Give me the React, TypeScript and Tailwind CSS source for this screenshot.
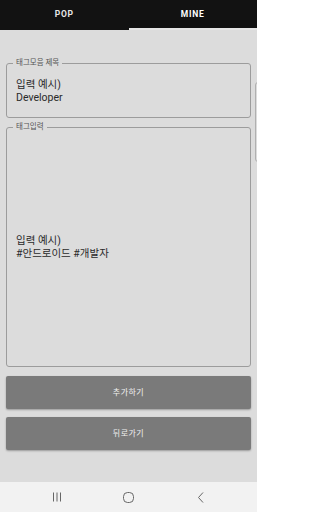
import type React from "react"

const font = { fontFamily: "Roboto, 'Noto Sans CJK KR', sans-serif" }

const OutlinedField: React.FC<{ label: string; heightClass: string; innerClass: string }> = ({ label, heightClass, innerClass }) => {
    return (
        <fieldset className={`border border-[#9c9c9c] rounded-[3px] ${heightClass}`}>
            <legend className="ml-[6px] px-[3px] text-[7.5px] leading-[8px] text-[#555]">{label}</legend>
            <div className={`flex items-center px-[9px] pb-[3px] ${innerClass}`}>
                <div className="text-[10.5px] leading-[13px] text-[#2a2a2a]">
                    {"입력 예시)"}
                    <br />
                    {label === "태그모음 제목" ? "Developer" : "#안드로이드 #개발자"}
                </div>
            </div>
        </fieldset>
    )
}

const App: React.FC = () => {
    return (
        <div style={font} className="relative w-[257px] h-[512px] flex flex-col bg-[#dcdcdc] overflow-hidden">
            {/* Tabs */}
            <div className="h-[30px] bg-[#121212] flex">
                <div className="flex-1 flex items-center justify-center border-b-2 border-[#121212]">
                    <span className="text-[8.5px] font-bold tracking-[0.8px] text-[#e8e8e8]">POP</span>
                </div>
                <div className="flex-1 flex items-center justify-center border-b-2 border-[#e6e6e6]">
                    <span className="text-[8.5px] font-bold tracking-[0.8px] text-white">MINE</span>
                </div>
            </div>

            {/* Form */}
            <div className="flex-1 flex flex-col px-[6px] pt-[29px]">
                <OutlinedField label="태그모음 제목" heightClass="h-[59px]" innerClass="h-[50px]" />
                <div className="mt-[5px]">
                    <OutlinedField label="태그입력" heightClass="h-[244px]" innerClass="h-[235px]" />
                </div>

                <button className="mt-[9px] h-[33px] rounded-[2px] bg-[#7a7a7a] shadow-[0_1px_2px_rgba(0,0,0,0.3)] text-[8px] tracking-[0.5px] text-[#f0f0f0]">
                    추가하기
                </button>
                <button className="mt-[8px] h-[33px] rounded-[2px] bg-[#7a7a7a] shadow-[0_1px_2px_rgba(0,0,0,0.3)] text-[8px] tracking-[0.5px] text-[#f0f0f0]">
                    뒤로가기
                </button>
            </div>

            {/* Android nav bar */}
            <div className="h-[30px] bg-[#f2f2f2] flex items-center justify-center">
                <div className="w-[72px] flex justify-center">
                    <svg width="10" height="10" viewBox="0 0 10 10" fill="none" stroke="#666" strokeWidth="1">
                        <path d="M1.5 0.5v9M5 0.5v9M8.5 0.5v9" />
                    </svg>
                </div>
                <div className="w-[72px] flex justify-center">
                    <svg width="11" height="11" viewBox="0 0 11 11" fill="none" stroke="#666" strokeWidth="1">
                        <rect x="0.5" y="0.5" width="10" height="10" rx="4" />
                    </svg>
                </div>
                <div className="w-[72px] flex justify-center">
                    <svg width="8" height="11" viewBox="0 0 8 11" fill="none" stroke="#666" strokeWidth="1">
                        <path d="M6 0.5L1.5 5.5L6 10.5" />
                    </svg>
                </div>
            </div>

            {/* next page peeking at the right edge */}
            <div className="absolute left-[255px] top-[82px] w-[12px] h-[80px] border border-[#b0b0b0] rounded-[3px]" />
        </div>
    )
}

export default App
